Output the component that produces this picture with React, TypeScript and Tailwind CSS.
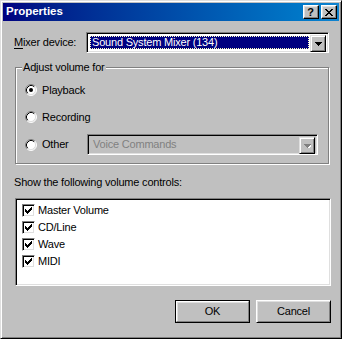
import React from "react";

const font = { fontFamily: '"Liberation Sans", Arial, sans-serif' };

function Radio({ checked }: { checked?: boolean }) {
  return (
    <svg width="12" height="12" viewBox="0 0 12 12" className="shrink-0">
      <circle cx="6" cy="6" r="5" fill="#fff" />
      <path d="M2.11 9.89 A5.5 5.5 0 0 1 9.89 2.11" stroke="#808080" fill="none" strokeWidth="1" />
      <path d="M9.89 2.11 A5.5 5.5 0 0 1 2.11 9.89" stroke="#fff" fill="none" strokeWidth="1" />
      <path d="M2.82 9.18 A4.5 4.5 0 0 1 9.18 2.82" stroke="#000" fill="none" strokeWidth="1" />
      <path d="M9.18 2.82 A4.5 4.5 0 0 1 2.82 9.18" stroke="#dfdfdf" fill="none" strokeWidth="1" />
      {checked && <circle cx="6" cy="6" r="2" fill="#000" />}
    </svg>
  );
}

function Check() {
  return (
    <div className="w-[13px] h-[13px] shrink-0 bg-white border border-t-[#808080] border-l-[#808080] border-b-white border-r-white shadow-[inset_1px_1px_0_#000,inset_-1px_-1px_0_#dfdfdf] relative">
      <svg width="13" height="13" viewBox="0 0 13 13" className="absolute left-[-1px] top-[-1px]" shapeRendering="crispEdges">
        <path
          d="M9 3h1v1h-1z M8 4h2v1h-2z M3 5h1v1h-1z M7 5h3v1h-3z M3 6h2v1h-2z M6 6h3v1h-3z M3 7h5v1h-5z M4 8h3v1h-3z M5 9h1v1h-1z"
          fill="#000"
        />
      </svg>
    </div>
  );
}

function DropButton({ disabled }: { disabled?: boolean }) {
  return (
    <div className="w-[16px] h-[17px] shrink-0 bg-[#c0c0c0] border border-t-[#dfdfdf] border-l-[#dfdfdf] border-b-black border-r-black shadow-[inset_1px_1px_0_#fff,inset_-1px_-1px_0_#808080] flex items-center justify-center">
      <svg width="7" height="4" viewBox="0 0 7 4" shapeRendering="crispEdges">
        {disabled && <path d="M1 1h7v1h-1v1h-1v1h-1v1h-1v-1h-1v-1h-1v-1h-1z" fill="#fff" />}
        <path d="M0 0h7v1h-1v1h-1v1h-1v1h-1v-1h-1v-1h-1v-1h-1z" fill={disabled ? "#808080" : "#000"} />
      </svg>
    </div>
  );
}

const sunken =
  "border border-t-[#808080] border-l-[#808080] border-b-white border-r-white shadow-[inset_1px_1px_0_#000,inset_-1px_-1px_0_#dfdfdf]";

export default function App() {
  return (
    <div style={font} className="w-[342px] h-[339px] bg-[#c0c0c0] text-black">
      <div className="w-[342px] h-[339px] flex flex-col border border-t-[#dfdfdf] border-l-[#dfdfdf] border-b-black border-r-black shadow-[inset_1px_1px_0_#fff,inset_-1px_-1px_0_#808080] p-[2px]">
        {/* Title bar */}
        <div className="h-[18px] flex items-center bg-gradient-to-r from-[#000080] to-[#1084d0] pl-[3px] pr-[2px]">
          <span className="text-white font-bold text-[11.5px] leading-none flex-1">Properties</span>
          <div className="w-[16px] h-[14px] bg-[#c0c0c0] border border-t-white border-l-white border-b-black border-r-black shadow-[inset_-1px_-1px_0_#808080,inset_1px_1px_0_#dfdfdf] flex items-center justify-center">
            <span className="font-bold text-[11px] leading-none pr-[1px]">?</span>
          </div>
          <div className="w-[16px] h-[14px] ml-[2px] bg-[#c0c0c0] border border-t-white border-l-white border-b-black border-r-black shadow-[inset_-1px_-1px_0_#808080,inset_1px_1px_0_#dfdfdf] flex items-center justify-center">
            <svg width="8" height="7" viewBox="0 0 8 7" shapeRendering="crispEdges" className="mr-[1px]">
              <path
                d="M0 0h2v1h-2z M6 0h2v1h-2z M1 1h2v1h-2z M5 1h2v1h-2z M2 2h4v1h-4z M3 3h2v1h-2z M2 4h4v1h-4z M1 5h2v1h-2z M5 5h2v1h-2z M0 6h2v1h-2z M6 6h2v1h-2z"
                fill="#000"
              />
            </svg>
          </div>
        </div>

        {/* Body */}
        <div className="flex flex-col text-[11px] tracking-[-0.2px] leading-none">
          {/* Mixer device */}
          <div className="flex items-center h-[21px] mt-[11px]">
            <span className="ml-[11px] w-[72px]">
              <span className="underline underline-offset-[2px]">M</span>ixer device:
            </span>
            <div className={`w-[243px] h-[21px] bg-white flex p-[2px] ${sunken}`}>
              <div className="flex-1 m-[1px] bg-[#000080] border border-dotted border-[#ffffc0] flex items-center pl-[1px] text-white">
                Sound System Mixer (134)
              </div>
              <DropButton />
            </div>
          </div>

          {/* Group */}
          <div className="relative ml-[12px] mt-[14px] w-[314px] h-[97px] border border-[#808080] shadow-[1px_1px_0_#fff,inset_1px_1px_0_#fff] flex flex-col">
            <span className="absolute left-[6px] top-[-7px] px-[1px] bg-[#c0c0c0] h-[13px] flex items-center">Adjust volume for</span>
            <div className="flex items-center h-[16px] mt-[14px] ml-[9px]">
              <Radio checked />
              <span className="ml-[5px]">Playback</span>
            </div>
            <div className="flex items-center h-[16px] mt-[11px] ml-[9px]">
              <Radio />
              <span className="ml-[5px]">Recording</span>
            </div>
            <div className="flex items-center h-[21px] mt-[9px] ml-[9px]">
              <Radio />
              <span className="ml-[5px] w-[45px]">Other</span>
              <div className={`w-[231px] h-[21px] bg-[#c0c0c0] flex p-[2px] ${sunken}`}>
                <div className="flex-1 flex items-center pl-[3px] text-[#808080]">Voice Commands</div>
                <DropButton disabled />
              </div>
            </div>
          </div>

          <div className="ml-[11px] mt-[12px] h-[13px] flex items-center">Show the following volume controls:</div>

          {/* List */}
          <div className={`ml-[12px] mt-[9px] w-[316px] h-[88px] bg-white p-[2px] ${sunken}`}>
            <div className="pt-[1px] flex flex-col">
              {["Master Volume", "CD/Line", "Wave", "MIDI"].map((t) => (
                <div key={t} className="h-[17px] flex items-center">
                  <div className="ml-[4px]">
                    <Check />
                  </div>
                  <span className="ml-[3px]">{t}</span>
                </div>
              ))}
            </div>
          </div>

          {/* Buttons */}
          <div className="flex justify-end mt-[14px] pr-[8px] gap-[6px]">
            <div className="w-[75px] h-[23px] border border-black">
              <div className="w-full h-full border border-t-white border-l-white border-b-[#808080] border-r-[#808080] shadow-[inset_1px_1px_0_#dfdfdf] flex items-center justify-center">
                OK
              </div>
            </div>
            <div className="w-[75px] h-[23px] border border-t-white border-l-white border-b-black border-r-black shadow-[inset_1px_1px_0_#dfdfdf,inset_-1px_-1px_0_#808080] flex items-center justify-center">
              Cancel
            </div>
          </div>
        </div>
      </div>
    </div>
  );
}
